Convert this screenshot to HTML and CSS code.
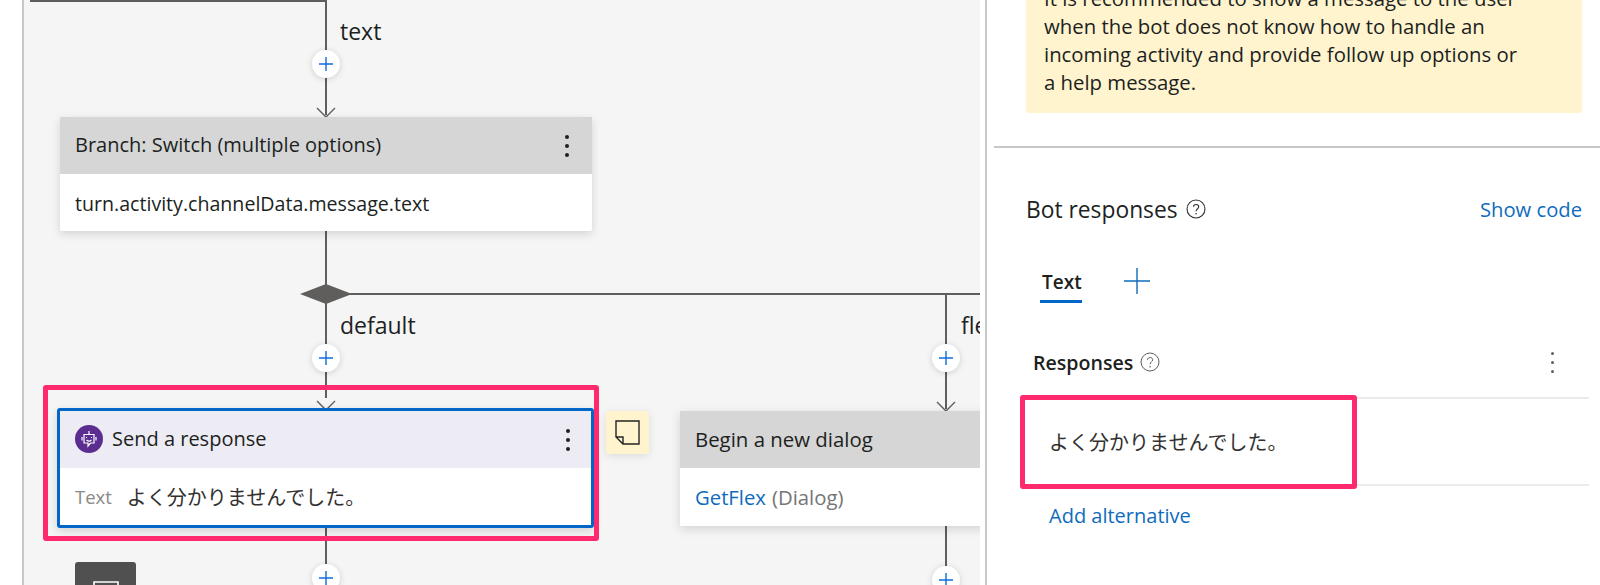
FILE: index.html
```html
<!DOCTYPE html>
<html>
<head>
  <title>Bot responses</title>
  <link rel="stylesheet" href="styles.css">
</head>
<body>

<div class="page">
  <!-- Flow diagram -->
  <div class="canvas">
    <div class="line" style="left: 30px; top: 0; width: 296px; height: 2px;"></div>
    <div class="line" style="left: 325px; top: 0; width: 2px; height: 115px;"></div>
    <div class="line" style="left: 325px; top: 230px; width: 2px; height: 168px;"></div>
    <div class="line" style="left: 325px; top: 528px; width: 2px; height: 40px;"></div>
    <div class="line" style="left: 340px; top: 293px; width: 640px; height: 2px;"></div>
    <div class="line" style="left: 945px; top: 294px; width: 2px; height: 115px;"></div>
    <div class="line" style="left: 945px; top: 526px; width: 2px; height: 42px;"></div>

    <svg class="diamond" width="52" height="20" viewBox="0 0 52 20"><path d="M26 0 52 10 26 20 0 10Z" fill="#605e5c"/></svg>

    <svg class="arrow" style="left: 316px; top: 107px;" width="20" height="11" viewBox="0 0 20 11"><path d="M1 1 10 10 19 1" fill="none" stroke="#605e5c" stroke-width="1.4"/></svg>
    <svg class="arrow" style="left: 316px; top: 400px;" width="20" height="11" viewBox="0 0 20 11"><path d="M1 1 10 10 19 1" fill="none" stroke="#605e5c" stroke-width="1.4"/></svg>
    <svg class="arrow" style="left: 936px; top: 401px;" width="20" height="11" viewBox="0 0 20 11"><path d="M1 1 10 10 19 1" fill="none" stroke="#605e5c" stroke-width="1.4"/></svg>

    <div class="edge-label" style="left: 340px; top: 16px;">text</div>
    <div class="edge-label" style="left: 340px; top: 310px;">default</div>
    <div class="edge-label" style="left: 961px; top: 310px;">flex</div>

    <div class="add" style="left: 312px; top: 50px;"><svg width="14" height="14" viewBox="0 0 14 14"><path d="M7 0V14M0 7H14" stroke="#0f6cdb" stroke-width="1.4"/></svg></div>
    <div class="add" style="left: 312px; top: 344px;"><svg width="14" height="14" viewBox="0 0 14 14"><path d="M7 0V14M0 7H14" stroke="#0f6cdb" stroke-width="1.4"/></svg></div>
    <div class="add" style="left: 312px; top: 564px;"><svg width="14" height="14" viewBox="0 0 14 14"><path d="M7 0V14M0 7H14" stroke="#0f6cdb" stroke-width="1.4"/></svg></div>
    <div class="add" style="left: 932px; top: 344px;"><svg width="14" height="14" viewBox="0 0 14 14"><path d="M7 0V14M0 7H14" stroke="#0f6cdb" stroke-width="1.4"/></svg></div>
    <div class="add" style="left: 932px; top: 566px;"><svg width="14" height="14" viewBox="0 0 14 14"><path d="M7 0V14M0 7H14" stroke="#0f6cdb" stroke-width="1.4"/></svg></div>

    <!-- Branch node -->
    <div class="node node-branch">
      <div class="node-head">
        <span class="node-title">Branch: Switch (multiple options)</span>
        <span class="kebab"><i></i><i></i><i></i></span>
      </div>
      <div class="node-body">turn.activity.channelData.message.text</div>
    </div>

    <!-- Send a response node -->
    <div class="node node-send">
      <div class="node-head">
        <svg class="bot-icon" width="28" height="28" viewBox="0 0 28 28">
          <circle cx="14" cy="14" r="14" fill="#5c2d91"/>
          <path d="M14 6V9M9 9.500H19V18H15.500L13 21V18H9ZM7 12V15.500M21 12V15.500" fill="none" stroke="#fff" stroke-width="1.2"/>
          <path d="M11.500 12V13M16.500 12V13M11.500 15C13 16.300 15 16.300 16.500 15" fill="none" stroke="#fff" stroke-width="1.1"/>
        </svg>
        <span class="node-title">Send a response</span>
        <span class="kebab"><i></i><i></i><i></i></span>
      </div>
      <div class="node-body"><span class="muted">Text</span><span class="ja">よく分かりませんでした。</span></div>
    </div>

    <!-- Sticky note button -->
    <div class="note">
      <svg width="25" height="25" viewBox="0 0 25 25"><path d="M1 1H24V24H8L1 17ZM1 17H8V24" fill="none" stroke="#252423" stroke-width="1.4"/></svg>
    </div>

    <!-- Begin dialog node -->
    <div class="node node-dialog">
      <div class="node-head"><span class="node-title">Begin a new dialog</span></div>
      <div class="node-body"><span class="link">GetFlex</span><span class="muted-dark">(Dialog)</span></div>
    </div>

    <!-- Next node, cut off by the window -->
    <div class="node-dark">
      <svg width="26" height="20" viewBox="0 0 26 20"><path d="M1 1H25V20H1ZM1 7H25" fill="none" stroke="#fff" stroke-width="1.6"/></svg>
    </div>

    <div class="mark mark-card"></div>
  </div>

  <!-- Properties panel -->
  <div class="panel">
    <div class="tip">
      It is recommended to show a message to the user<br>
      when the bot does not know how to handle an<br>
      incoming activity and provide follow up options or<br>
      a help message.
    </div>

    <div class="section">
      <div class="section-head">
        <span class="section-title">Bot responses</span>
        <svg class="help" width="20" height="20" viewBox="0 0 20 20"><circle cx="10" cy="10" r="9" fill="none" stroke="#323130" stroke-width="1.1"/><path d="M7.500 7.800C7.500 4.800 12.700 4.800 12.700 7.800C12.700 9.800 10.100 9.800 10.100 12.300" fill="none" stroke="#323130" stroke-width="1.1"/><circle cx="10.100" cy="14.800" r=".8" fill="#323130"/></svg>
        <span class="link show-code">Show code</span>
      </div>

      <div class="tabs">
        <span class="tab">Text</span>
        <svg class="tab-add" width="26" height="26" viewBox="0 0 26 26"><path d="M13 0V26M0 13H26" stroke="#0f6cbd" stroke-width="1.4"/></svg>
      </div>

      <div class="responses-head">
        <span class="responses-title">Responses</span>
        <svg class="help" width="20" height="20" viewBox="0 0 20 20"><circle cx="10" cy="10" r="9" fill="none" stroke="#605e5c" stroke-width="1"/><path d="M7.500 7.800C7.500 4.800 12.700 4.800 12.700 7.800C12.700 9.800 10.100 9.800 10.100 12.300" fill="none" stroke="#605e5c" stroke-width="1"/><circle cx="10.100" cy="14.800" r=".8" fill="#605e5c"/></svg>
        <span class="kebab kebab-small"><i></i><i></i><i></i></span>
      </div>

      <div class="response-row">
        <span class="ja">よく分かりませんでした。</span>
        <div class="mark mark-row"></div>
      </div>

      <div class="link add-alt">Add alternative</div>
    </div>
  </div>
</div>

</body>
</html>
```

FILE: styles.css
```css
body {
  font-family: "Open Sans", "Noto Sans CJK JP", sans-serif;
  background-color: #ffffff;
  color: #201f1e;
  margin: 0;
  height: 585px;
  overflow: hidden;
}

.page {
  display: flex;
  height: 585px;
  overflow: hidden;
}

/* diagram */
.canvas {
  position: relative;
  flex: none;
  width: 980px;
  height: 585px;
  overflow: hidden;
  background: linear-gradient(to right, #ffffff 22px, #c8c8c8 22px, #c8c8c8 24px, #f5f5f5 24px);
}

.line {
  position: absolute;
  background-color: #605e5c;
}

.diamond {
  position: absolute;
  left: 300px;
  top: 284px;
}

.arrow {
  position: absolute;
}

.edge-label {
  position: absolute;
  font-size: 23px;
  line-height: 30px;
  white-space: nowrap;
}

.add {
  position: absolute;
  width: 28px;
  height: 28px;
  display: flex;
  align-items: center;
  justify-content: center;
  border-radius: 50%;
  background-color: #ffffff;
  box-shadow: 0 1px 6px rgba(0, 0, 0, 0.16);
}

.node {
  position: absolute;
  background-color: #ffffff;
  box-shadow: 0 3px 10px rgba(0, 0, 0, 0.14);
  font-size: 20px;
}

.node-head {
  display: flex;
  align-items: center;
  height: 57px;
  box-sizing: border-box;
  padding: 0 15px 2px;
  background-color: #d6d6d6;
}

.node-body {
  display: flex;
  align-items: center;
  height: 57px;
  padding: 0 15px;
  white-space: pre;
}

.node-title {
  flex: 1;
  white-space: nowrap;
}

.node-branch {
  left: 60px;
  top: 117px;
  width: 532px;
  border-radius: 2px;
}

.node-branch .node-body {
  box-sizing: border-box;
  padding-top: 2px;
  font-size: 19.6px;
}

.node-branch .kebab {
  margin-top: 2px;
}

.node-send {
  left: 57px;
  top: 408px;
  width: 531px;
  border: 3px solid #0067c8;
  border-radius: 3px;
}

.node-send .node-head {
  padding-right: 13px;
  background-color: #edebf3;
}

.node-send .kebab {
  margin-top: 2px;
}

.bot-icon {
  flex: none;
  margin-right: 9px;
}

.node-dialog {
  left: 680px;
  top: 411px;
  width: 340px;
}

.node-dialog .node-title {
  font-size: 20.4px;
}

.node-dialog .node-body {
  height: 58px;
  font-size: 20.3px;
}

.node-dark {
  position: absolute;
  left: 75px;
  top: 562px;
  width: 61px;
  height: 50px;
  padding-top: 19px;
  box-sizing: border-box;
  display: flex;
  justify-content: center;
  align-items: flex-start;
  border-radius: 3px;
  background-color: #505050;
}

.muted {
  color: #8a8886;
  font-size: 18.5px;
  margin-right: 15px;
}

.muted-dark {
  color: #757575;
  margin-left: 6px;
}

.ja {
  font-family: "Noto Sans CJK JP", sans-serif;
  font-size: 20px;
  color: #323130;
}

.link {
  color: #0f6cbd;
}

.note {
  position: absolute;
  left: 606px;
  top: 411px;
  width: 43px;
  height: 43px;
  display: flex;
  align-items: center;
  justify-content: center;
  border-radius: 3px;
  background-color: #fff4ce;
  box-shadow: 0 2px 8px rgba(0, 0, 0, 0.1);
}

.kebab {
  display: flex;
  flex-direction: column;
  gap: 5px;
  flex: none;
  width: 4px;
  margin-right: 8px;
}

.kebab i {
  width: 4px;
  height: 4px;
  border-radius: 50%;
  background-color: #201f1e;
}

.kebab-small {
  gap: 6px;
  width: 3px;
  margin: 0 0 0 auto;
}

.kebab-small i {
  width: 3px;
  height: 3px;
  background-color: #605e5c;
}

/* red annotation boxes */
.mark {
  position: absolute;
  border: 5px solid #ff2a6d;
  border-radius: 3px;
  box-sizing: border-box;
}

.mark-card {
  left: 43px;
  top: 385px;
  width: 556px;
  height: 156px;
}

.mark-row {
  left: -7px;
  top: -4px;
  width: 337px;
  height: 94px;
}

/* properties panel */
.panel {
  flex: 1;
  margin-left: 5px;
  border-left: 2px solid #c8c8c8;
}

.tip {
  margin: -28px 18px 0 39px;
  padding: 12px 18px 17px;
  border-radius: 3px;
  background-color: #fff4ce;
  font-size: 20.35px;
  line-height: 28px;
  white-space: nowrap;
}

.section {
  margin: 33px 0 0 7px;
  padding: 0 18px 0 33px;
  border-top: 2px solid #c8c8c8;
}

.section-head {
  display: flex;
  align-items: center;
  margin-top: 46px;
  height: 30px;
}

.section-title {
  font-size: 22.8px;
  margin-left: -1px;
}

.section-head .help {
  margin-left: 8px;
}

.show-code {
  margin-left: auto;
  font-size: 20.2px;
}

.tabs {
  display: flex;
  align-items: center;
  height: 26px;
  margin: 44px 0 0 15px;
}

.tab {
  padding-top: 2px;
  font-size: 19px;
  font-weight: 600;
}

.tab-add {
  margin-left: 42px;
}

.responses-head {
  display: flex;
  align-items: center;
  height: 30px;
  margin: 53px 28px 0 6px;
  position: relative;
}

.responses-head::before {
  content: "";
  position: absolute;
  left: 7px;
  top: -47px;
  width: 42px;
  height: 3px;
  background-color: #0067c8;
}

.responses-title {
  font-size: 19.6px;
  font-weight: 600;
}

.responses-head .help {
  margin-left: 7px;
}

.response-row {
  position: relative;
  display: flex;
  align-items: center;
  height: 85px;
  margin: 20px -7px 0 0;
  padding-left: 22px;
  border-top: 2px solid #edebe9;
  border-bottom: 2px solid #edebe9;
}

.add-alt {
  margin: 16px 0 0 22px;
  font-size: 20px;
}
```
